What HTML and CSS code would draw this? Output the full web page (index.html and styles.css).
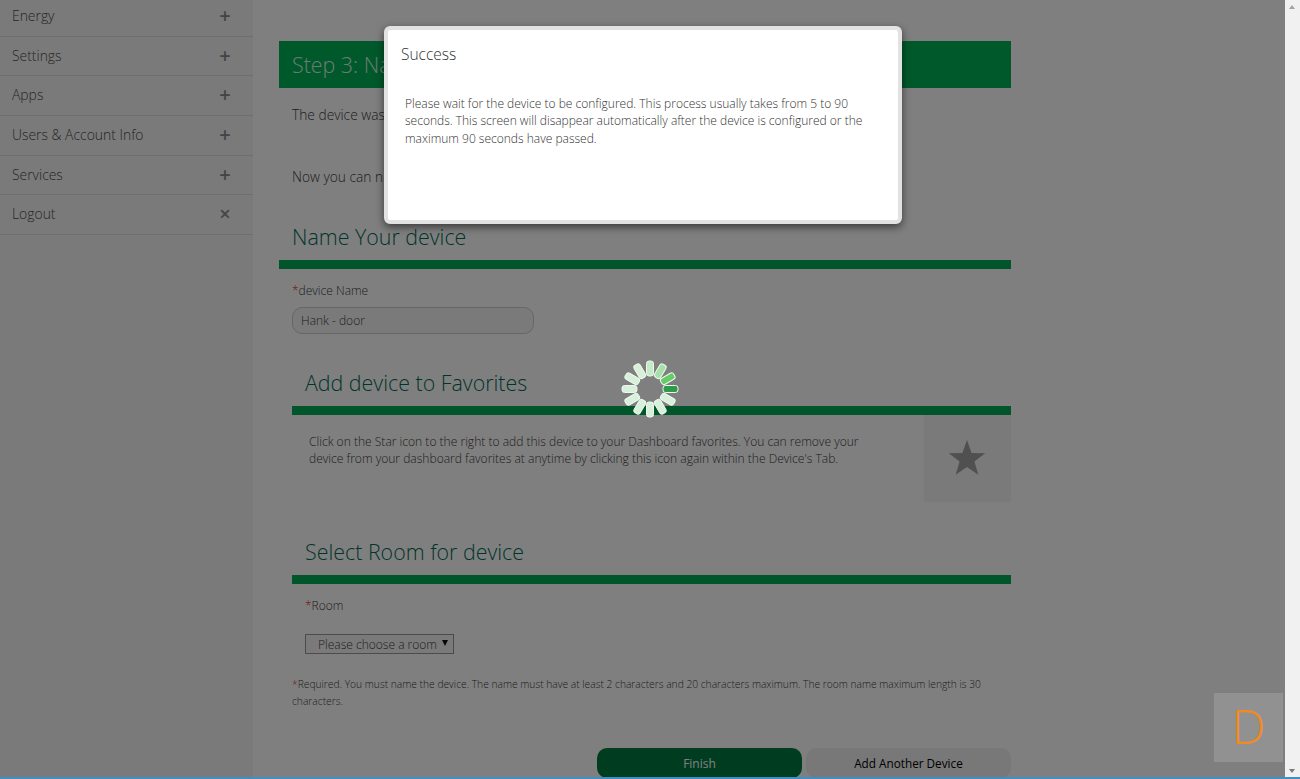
FILE: index.html
```html
<!DOCTYPE html>
<html lang="en">
<head>
    <meta charset="UTF-8">
    <meta name="viewport" content="width=device-width, initial-scale=1.0">
    <title>Add Device</title>
    <link rel="stylesheet" href="styles.css">
</head>
<body>
    <div class="window">
        <div class="page">
            <nav class="sidebar">
                <a class="nav-item">Energy <span class="nav-icon">+</span></a>
                <a class="nav-item">Settings <span class="nav-icon">+</span></a>
                <a class="nav-item">Apps <span class="nav-icon">+</span></a>
                <a class="nav-item">Users &amp; Account Info <span class="nav-icon">+</span></a>
                <a class="nav-item">Services <span class="nav-icon">+</span></a>
                <a class="nav-item">Logout <span class="nav-icon">×</span></a>
            </nav>
            <main class="content">
                <h1 class="step-title">Step 3: Name</h1>
                <p class="intro">The device was</p>
                <p class="intro intro-next">Now you can n</p>

                <section class="name-section">
                    <h2 class="section-title">Name Your device</h2>
                    <label class="field-label" for="device-name"><span class="req">*</span>device Name</label>
                    <input class="text-input" type="text" id="device-name" value="Hank - door">
                </section>

                <section class="sub-section favorite-section">
                    <h2 class="section-title">Add device to Favorites</h2>
                    <div class="favorite-row">
                        <p class="favorite-text">Click on the Star icon to the right to add this device to your Dashboard favorites. You can remove your device from your dashboard favorites at anytime by clicking this icon again within the Device's Tab.</p>
                        <div class="favorite-star">
                            <svg width="38" height="36" viewBox="0 0 38 36"><path d="M19 1l4.600 12.900 13.600.4-10.800 8.300 3.900 13.100L19 27.900 7.700 35.700l3.900-13.100L.8 14.300l13.600-.4z"/></svg>
                        </div>
                    </div>
                </section>

                <section class="sub-section room-section">
                    <h2 class="section-title">Select Room for device</h2>
                    <label class="field-label room-label" for="room"><span class="req">*</span>Room</label>
                    <div class="select-wrap">
                        <select class="room-select" id="room">
                            <option>Please choose a room</option>
                        </select>
                    </div>
                </section>

                <p class="required-note"><span class="req">*</span>Required. You must name the device. The name must have at least 2 characters and 20 characters maximum. The room name maximum length is 30 characters.</p>

                <div class="actions">
                    <button type="button" class="btn btn-finish">Finish</button>
                    <button type="button" class="btn btn-another">Add Another Device</button>
                </div>
            </main>

            <div class="overlay"></div>

            <div class="modal">
                <h3 class="modal-title">Success</h3>
                <p class="modal-text">Please wait for the device to be configured. This process usually takes from 5 to 90 seconds. This screen will disappear automatically after the device is configured or the maximum 90 seconds have passed.</p>
            </div>

            <svg class="spinner" width="58" height="58" viewBox="-29 -29 58 58">
                <g class="spoke spoke-1"><rect x="13" y="-3.500" width="15" height="7" rx="2.500"/></g>
                <g class="spoke spoke-2" transform="rotate(-30)"><rect x="13" y="-3.500" width="15" height="7" rx="2.500"/></g>
                <g class="spoke spoke-3" transform="rotate(-60)"><rect x="13" y="-3.500" width="15" height="7" rx="2.500"/></g>
                <g class="spoke spoke-4" transform="rotate(-90)"><rect x="13" y="-3.500" width="15" height="7" rx="2.500"/></g>
                <g class="spoke" transform="rotate(-120)"><rect x="13" y="-3.500" width="15" height="7" rx="2.500"/></g>
                <g class="spoke" transform="rotate(-150)"><rect x="13" y="-3.500" width="15" height="7" rx="2.500"/></g>
                <g class="spoke" transform="rotate(180)"><rect x="13" y="-3.500" width="15" height="7" rx="2.500"/></g>
                <g class="spoke" transform="rotate(150)"><rect x="13" y="-3.500" width="15" height="7" rx="2.500"/></g>
                <g class="spoke" transform="rotate(120)"><rect x="13" y="-3.500" width="15" height="7" rx="2.500"/></g>
                <g class="spoke" transform="rotate(90)"><rect x="13" y="-3.500" width="15" height="7" rx="2.500"/></g>
                <g class="spoke" transform="rotate(60)"><rect x="13" y="-3.500" width="15" height="7" rx="2.500"/></g>
                <g class="spoke" transform="rotate(30)"><rect x="13" y="-3.500" width="15" height="7" rx="2.500"/></g>
            </svg>

            <div class="badge">D</div>
        </div>

        <div class="scrollbar">
            <span class="scroll-arrow scroll-up"></span>
            <span class="scroll-arrow scroll-down"></span>
        </div>
    </div>
    <div class="window-edge"></div>
</body>
</html>
```

FILE: styles.css
```css
* {
    box-sizing: border-box;
}

html,
body {
    margin: 0;
    height: 100%;
    overflow: hidden;
}

body {
    font-family: "Open Sans", "Liberation Sans", sans-serif;
    font-weight: 300;
    font-size: 12px;
    color: #3c3c3c;
    background: #fff;
    display: flex;
    flex-direction: column;
}

.window {
    flex: 1;
    min-height: 0;
    display: flex;
}

.window-edge {
    height: 2px;
    background: #3d8fca;
}

.page {
    position: relative;
    flex: 1;
    min-width: 0;
    display: flex;
    overflow: hidden;
    background: #fff;
}

/* sidebar */
.sidebar {
    width: 253px;
    flex-shrink: 0;
    background: #f4f4f4;
    margin-top: -3px;
}

.nav-item {
    display: flex;
    align-items: center;
    justify-content: space-between;
    height: 39.7px;
    padding: 0 20px 2px 12px;
    border-bottom: 1px solid #ddd;
    font-size: 13.9px;
    color: #4c4c4c;
}

.nav-icon {
    width: 16px;
    text-align: center;
    font-size: 20px;
    font-weight: 600;
    color: #888;
}

/* main column */
.content {
    width: 732px;
    margin-left: 26px;
    padding-top: 41px;
}

.step-title {
    margin: 0;
    height: 47px;
    padding-left: 13px;
    background: #00b256;
    color: #dff3e8;
    font-size: 21.4px;
    font-weight: 300;
    line-height: 47px;
}

.intro {
    margin: 17px 0 0 13px;
    font-size: 13.75px;
    line-height: 19px;
}

.intro-next {
    margin-top: 43px;
}

.section-title {
    margin: 0;
    padding-left: 13px;
    height: 49px;
    border-bottom: 9px solid #00ad54;
    color: #006b55;
    font-size: 21.4px;
    font-weight: 300;
    line-height: 33px;
}

.name-section {
    margin-top: 34px;
}

.field-label {
    display: block;
    margin: 13px 0 0 13px;
    line-height: 17px;
}

.req {
    color: #e03030;
}

.text-input {
    display: block;
    width: 242px;
    height: 27px;
    margin: 8px 0 0 13px;
    padding: 0 8px;
    border: 1px solid #ccc;
    border-radius: 10px;
    background: #f4f4f4;
    font: inherit;
    color: #3c3c3c;
}

.sub-section {
    margin-left: 13px;
}

.favorite-section {
    margin-top: 32px;
}

.favorite-row {
    display: flex;
    justify-content: space-between;
}

.favorite-text {
    width: 562px;
    margin: 18px 0 0 17px;
    font-size: 12.05px;
    line-height: 17px;
}

.favorite-star {
    width: 87px;
    height: 87px;
    padding: 0 2px 4px 0;
    background: #f4f4f4;
    display: flex;
    align-items: center;
    justify-content: center;
}

.favorite-star svg {
    fill: #a0a0a0;
}

.room-section {
    margin-top: 33px;
}

.room-label {
    margin: 13px 0 0 13px;
}

.select-wrap {
    position: relative;
    width: 149px;
    margin: 20px 0 0 13px;
}

.select-wrap::after {
    content: "";
    position: absolute;
    right: 6px;
    top: 6px;
    border-left: 3px solid transparent;
    border-right: 3px solid transparent;
    border-top: 6px solid #111;
}

.room-select {
    display: block;
    width: 100%;
    height: 20px;
    padding: 0 0 0 12px;
    border: 1px solid #999;
    border-radius: 0;
    background: #f4f4f4;
    font: inherit;
    color: #3c3c3c;
    appearance: none;
}

.required-note {
    margin: 22px 0 0 13px;
    font-size: 10.25px;
    line-height: 17px;
}

.actions {
    display: flex;
    justify-content: flex-end;
    gap: 4px;
    margin-top: 38px;
}

.btn {
    width: 205px;
    height: 30px;
    border: 0;
    border-radius: 10px;
    font-family: inherit;
    font-size: 12px;
}

.btn-finish {
    background: #007a41;
    color: #fff;
}

.btn-another {
    background: #f0f0f0;
    color: #000;
    font-size: 11.75px;
    font-weight: 400;
}

/* loading state, sits over the page */
.overlay {
    position: absolute;
    inset: 0;
    background: rgba(0, 0, 0, 0.5);
}

.modal {
    position: absolute;
    left: 384px;
    top: 26px;
    width: 518px;
    height: 198px;
    padding: 13px 30px 0 13px;
    background: #fff;
    border: 4px solid #e2e2e2;
    border-radius: 6px;
    box-shadow: 0 3px 8px rgba(0, 0, 0, 0.55);
}

.modal-title {
    margin: 0;
    font-size: 15.5px;
    font-weight: 300;
    line-height: 22px;
    color: #333;
}

.modal-text {
    margin: 30px 0 0 4px;
    line-height: 17.3px;
    color: #333;
}

.spinner {
    position: absolute;
    left: 621px;
    top: 360px;
}

.spoke rect {
    fill: #d6f0da;
    stroke: #eef8ef;
    stroke-width: 1;
}

.spoke-1 rect {
    fill: #2e9a4a;
}

.spoke-2 rect {
    fill: #66cc66;
}

.spoke-3 rect {
    fill: #a6e0a8;
}

.spoke-4 rect {
    fill: #c4eac8;
}

.badge {
    position: absolute;
    left: 1214px;
    top: 693px;
    width: 69px;
    height: 69px;
    background: rgba(255, 255, 255, 0.14);
    color: #f28b1f;
    font-size: 48px;
    line-height: 66px;
    text-align: center;
}

/* browser scrollbar */
.scrollbar {
    position: relative;
    width: 15px;
    flex-shrink: 0;
    background: #f1f1f1;
}

.scroll-arrow {
    position: absolute;
    left: 4px;
    border-left: 3.5px solid transparent;
    border-right: 3.5px solid transparent;
}

.scroll-up {
    top: 5px;
    border-bottom: 4px solid #a3a3a3;
}

.scroll-down {
    bottom: 4px;
    border-top: 4px solid #7a7a7a;
}
```
